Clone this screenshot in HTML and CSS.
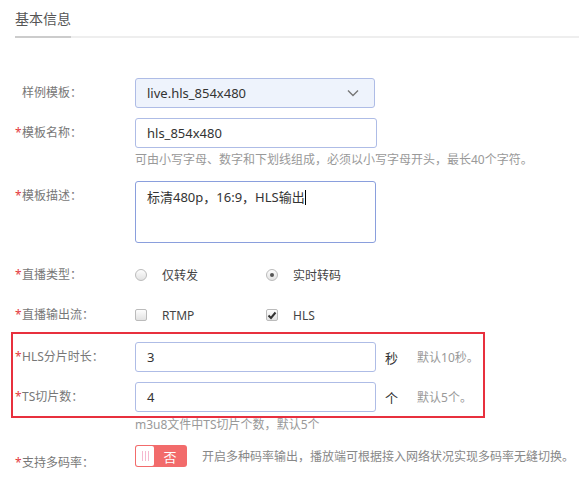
FILE: index.html
```html
<!DOCTYPE html>
<html lang="zh-CN">
<head>
    <meta charset="UTF-8">
    <meta name="viewport" content="width=device-width, initial-scale=1.0">
    <title>基本信息 - 直播模板</title>
    <link rel="stylesheet" href="styles.css">
</head>
<body>
    <div class="panel">
        <div class="tabs">
            <span class="tab active">基本信息</span>
        </div>

        <div class="form">
            <div class="row">
                <label class="label">样例模板：</label>
                <div class="field">
                    <div class="select">
                        <span>live.hls_854x480</span>
                        <svg class="chevron" width="12" height="8" viewBox="0 0 12 8"><path d="M1 1.5 L6 6.5 L11 1.5" fill="none" stroke="#777" stroke-width="1.4"/></svg>
                    </div>
                </div>
            </div>

            <div class="row row-name">
                <label class="label req">模板名称：</label>
                <div class="field">
                    <div class="input input-name">hls_854x480</div>
                    <div class="hint">可由小写字母、数字和下划线组成，必须以小写字母开头，最长40个字符。</div>
                </div>
            </div>

            <div class="row row-desc">
                <label class="label req">模板描述：</label>
                <div class="field">
                    <div class="textarea">标清480p，16:9，HLS输出<span class="caret"></span></div>
                </div>
            </div>

            <div class="row row-type">
                <label class="label req">直播类型：</label>
                <div class="field options">
                    <span class="option"><i class="radio"></i>仅转发</span>
                    <span class="option"><i class="radio checked"></i>实时转码</span>
                </div>
            </div>

            <div class="row row-output">
                <label class="label req">直播输出流：</label>
                <div class="field options">
                    <span class="option"><i class="checkbox"></i>RTMP</span>
                    <span class="option">
                        <i class="checkbox checked">
                            <svg width="10" height="9" viewBox="0 0 10 9"><path d="M1.5 4.5 L4 7 L8.5 1.5" fill="none" stroke="#333" stroke-width="2"/></svg>
                        </i>HLS
                    </span>
                </div>
            </div>

            <div class="row row-hls">
                <label class="label req">HLS分片时长：</label>
                <div class="field inline">
                    <div class="input input-num">3</div>
                    <span class="unit">秒</span>
                    <span class="note">默认10秒。</span>
                </div>
            </div>

            <div class="row row-ts">
                <label class="label req">TS切片数：</label>
                <div class="field">
                    <div class="inline">
                        <div class="input input-num">4</div>
                        <span class="unit">个</span>
                        <span class="note">默认5个。</span>
                    </div>
                    <div class="hint">m3u8文件中TS切片个数，默认5个</div>
                </div>
            </div>

            <div class="row row-multi">
                <label class="label req">支持多码率：</label>
                <div class="field inline">
                    <div class="switch">
                        <span class="knob"><i></i><i></i><i></i></span>
                        <span class="switch-text">否</span>
                    </div>
                    <span class="desc">开启多种码率输出，播放端可根据接入网络状况实现多码率无缝切换。</span>
                </div>
            </div>
        </div>

        <!-- annotation frame drawn over the two slice rows -->
        <div class="mark"></div>
    </div>
</body>
</html>
```

FILE: styles.css
```css
body {
    margin: 0;
    background: #fff;
    font-family: "Noto Sans", "Noto Sans CJK SC", sans-serif;
    font-size: 12px;
    color: #333;
}
.panel {
    position: relative;
    padding-left: 15px;
    height: 490px;
    overflow: hidden;
}
.tabs {
    padding-top: 9px;
    border-bottom: 2px solid #eee;
    height: 27px;
}
.tab {
    display: inline-block;
    font-size: 14px;
    line-height: 20px;
    color: #555;
    padding-bottom: 7px;
}
.tab.active {
    border-bottom: 2px solid #ccc;
}
.form {
    margin-top: 40px;
}
.row {
    display: flex;
    align-items: flex-start;
    margin-bottom: 10px;
}
.label {
    width: 120px;
    flex: none;
    line-height: 30px;
    color: #777;
    padding-left: 7px;
    box-sizing: border-box;
}
.label.req {
    padding-left: 0;
}
.label.req::before {
    content: "*";
    color: #e4393c;
    display: inline-block;
    width: 7px;
}
.field {
    display: flex;
    flex-direction: column;
}
.inline {
    display: flex;
    flex-direction: row;
    align-items: center;
}
.select,
.input,
.textarea {
    box-sizing: border-box;
    border: 1px solid #aebce6;
    border-radius: 3px;
    font-size: 13px;
    color: #333;
    padding: 0 11px;
}
.select {
    width: 240px;
    height: 30px;
    line-height: 28px;
    background: #eef3fc;
    display: flex;
    justify-content: space-between;
    align-items: center;
}
.chevron {
    margin-right: 4px;
}
.input {
    height: 30px;
    line-height: 28px;
    background: #fff;
}
.input-name {
    width: 242px;
}
.input-num {
    width: 241px;
}
.hint {
    color: #999;
    line-height: 16px;
    margin-top: 4px;
}
.row-name {
    margin-bottom: 13px;
}
.textarea {
    width: 241px;
    height: 62px;
    padding-top: 5px;
    line-height: 20px;
    border-color: #8a9fdd;
}
.caret {
    display: inline-block;
    width: 0;
    height: 15px;
    border-left: 1px solid #000;
    vertical-align: -3px;
}
.row-desc {
    margin-bottom: 17px;
}
.options {
    flex-direction: row;
    height: 30px;
    align-items: center;
}
.option {
    width: 131px;
    display: flex;
    align-items: center;
    color: #444;
    font-size: 12px;
}
.radio,
.checkbox {
    width: 12px;
    height: 12px;
    box-sizing: border-box;
    border: 1px solid #bbb;
    background: linear-gradient(#fdfdfd, #e2e2e2);
    margin-right: 15px;
    display: inline-flex;
    align-items: center;
    justify-content: center;
}
.radio {
    border-radius: 50%;
}
.radio.checked::after {
    content: "";
    width: 4px;
    height: 4px;
    border-radius: 50%;
    background: #555;
}
.checkbox {
    border-radius: 2px;
}
.row-output {
    margin-bottom: 12px;
}
.unit {
    margin-left: 9px;
    font-size: 13px;
    color: #333;
}
.note {
    margin-left: 19px;
    color: #999;
}
.row-ts .hint {
    margin-top: 5px;
}
.row-ts {
    margin-bottom: 12px;
}
.switch {
    width: 52px;
    height: 22px;
    box-sizing: border-box;
    background: #f26b6b;
    border-radius: 3px;
    padding: 1px;
    display: flex;
    align-items: center;
}
.knob {
    width: 18px;
    height: 20px;
    background: #fff;
    border-radius: 2px;
    display: flex;
    justify-content: center;
    align-items: center;
    gap: 2px;
}
.knob i {
    width: 1px;
    height: 10px;
    background: #f5b8cf;
}
.switch-text {
    flex: 1;
    text-align: center;
    color: #fff;
    font-size: 13px;
}
.desc {
    margin-left: 15px;
    color: #888;
}
.row-multi .label {
    padding-top: 3px;
}
.mark {
    position: absolute;
    left: 11px;
    top: 332px;
    width: 470px;
    height: 82px;
    border: 2px solid #e8303e;
}
```
